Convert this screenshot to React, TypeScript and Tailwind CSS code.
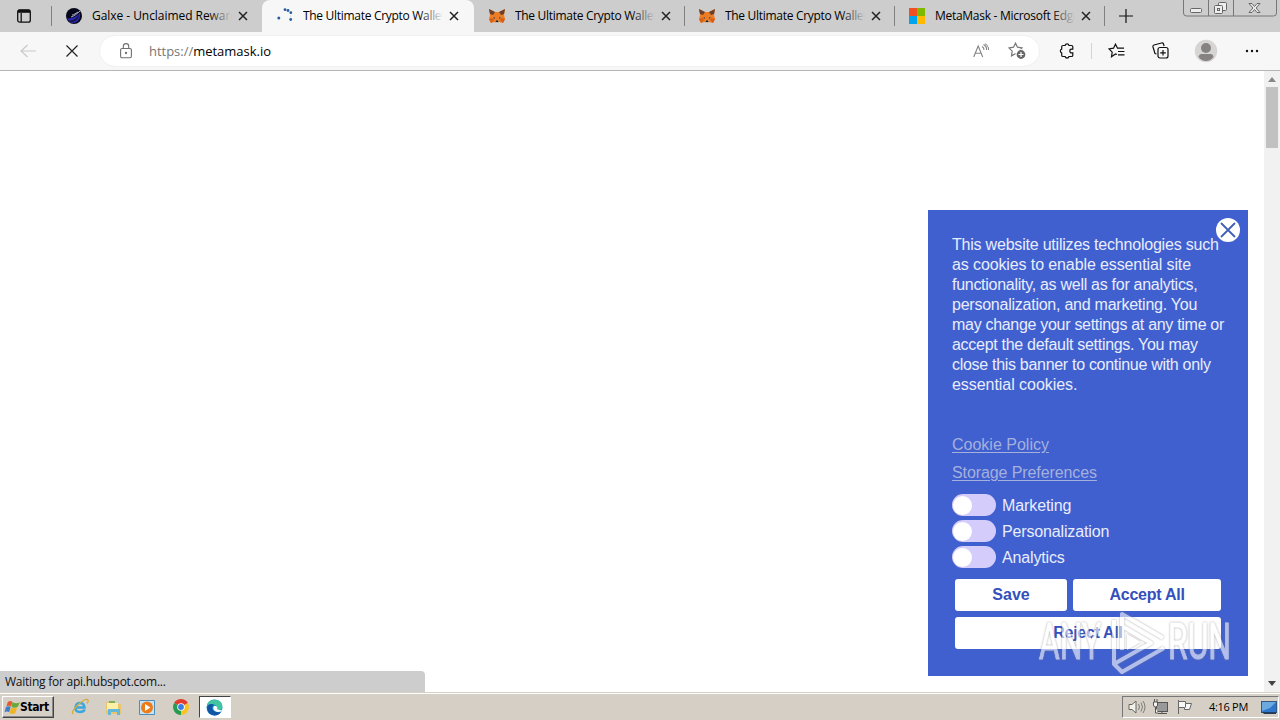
import type { ReactNode } from 'react';

type TabProps = {
  icon: ReactNode;
  title: string;
  active?: boolean;
  divider?: boolean;
  spacing: string;
};

function CloseX() {
  return (
    <svg width="10" height="10" viewBox="0 0 10 10" fill="none" stroke="#222" strokeWidth="1.5">
      <path d="M1 1 9 9M9 1 1 9" />
    </svg>
  );
}

function Tab({ icon, title, active, divider, spacing }: TabProps) {
  return (
    <div
      className={`relative flex h-8 shrink-0 items-center ${
        active ? 'w-[212px] rounded-t-lg bg-[#f7f7f7] pl-[15px]' : 'w-[210px] pl-[14px]'
      }`}
    >
      <div className="h-4 w-4 shrink-0">{icon}</div>
      <div className={`relative ml-[10px] w-[140px] overflow-hidden whitespace-nowrap text-[12px] leading-5 ${spacing}`}>
        {title}
        <div
          className={`absolute inset-y-0 right-0 w-6 bg-linear-to-r from-transparent ${
            active ? 'to-[#f7f7f7]' : 'to-[#cdcdcd]'
          }`}
        />
      </div>
      <div className="ml-[6px]">
        <CloseX />
      </div>
      {divider && <div className="ml-auto h-5 w-px bg-[#808080]" />}
    </div>
  );
}

function Galxe() {
  return (
    <svg viewBox="0 0 16 16">
      <circle cx="8" cy="8" r="8" fill="#07071c" />
      <path d="M1 10c4 1 9-1 13-5 1 6-3 10-7 10-3 0-5-2-6-5Z" fill="#2827a8" />
      <path d="M1 12c5 2 9-1 12-5-1 6-8 9-12 5Z" fill="#111034" />
      <path d="M5 9c3-1 6-3 9-6M6 7c2 0 4-2 6-3" stroke="#d4d4f3" strokeWidth=".8" fill="none" />
    </svg>
  );
}

function Spinner() {
  return (
    <svg viewBox="0 0 16 16" fill="#255f9e">
      <circle cx="1.8" cy="10" r="1.5" />
      <circle cx="13.7" cy="11.5" r="1.4" />
      <circle cx="13.8" cy="4.7" r="1.4" />
      <circle cx="8" cy="1.7" r="1.4" />
      <circle cx="11" cy="2.5" r="1.4" />
      <circle cx="13.7" cy="8" r=".5" opacity=".4" />
    </svg>
  );
}

function Fox() {
  return (
    <svg viewBox="0 0 16 16">
      <path d="M0 1 6 4h4l6-3-1 6 1 4-2 4-4-1-2 1-2-1-4 1-2-4 1-4Z" fill="#ed7d24" />
      <path d="m0 1 6 3-2 3-3-1ZM16 1l-6 3 2 3 3-1Z" fill="#6c3f2b" />
      <path d="m0 11 4-1 1 2-3 3ZM16 11l-4-1-1 2 3 3Z" fill="#d65e16" />
      <path d="m4 9 2 .5V11ZM12 9l-2 .5V11Z" fill="#28435a" />
      <path d="M6.5 12.5h3L10 15H6Z" fill="#cbb7aa" />
      <path d="M7 12.5h2l.5 1.5h-3Z" fill="#202020" />
    </svg>
  );
}

function MicrosoftLogo() {
  return (
    <div className="grid h-4 w-4 grid-cols-2">
      <div className="bg-[#f25022]" />
      <div className="bg-[#7fba00]" />
      <div className="bg-[#00a4ef]" />
      <div className="bg-[#ffb900]" />
    </div>
  );
}

function WindowButtons() {
  return (
    <svg width="94" height="17" viewBox="0 0 94 17" fill="none" stroke="#777">
      <path d="M.5 0v13q0 3 3 3h87q3 0 3-3V0M25.500 0v16M50.500 0v16" />
      <rect x="7.500" y="8.500" width="11" height="4" rx="1" fill="#ededed" stroke="#666" />
      <rect x="35.500" y="2.500" width="8" height="8" rx="1" fill="#eee" stroke="#666" />
      <rect x="31.500" y="5.500" width="8" height="8" rx="1" fill="#eee" stroke="#666" />
      <rect x="34.500" y="8.500" width="2" height="2" stroke="#666" />
      <path d="M66 3.500h3l2.500 3 2.500-3h3l-4 4.500 4 4.500h-3l-2.500-3-2.500 3h-3l4-4.500Z" fill="#eee" stroke="#666" />
    </svg>
  );
}

function TabStrip() {
  return (
    <div className="flex h-8 bg-[#cdcdcd]">
      <div className="flex w-[52px] shrink-0 items-center justify-between pl-[17px]">
        <svg width="14" height="14" viewBox="0 0 14 14" fill="none" stroke="#111" strokeWidth="1.300">
          <rect x=".7" y=".9" width="12.600" height="12.300" rx="2" />
          <path d="M4.200 4v9" />
          <path d="M1 2.300h12" strokeWidth="3" />
        </svg>
        <div className="h-5 w-px bg-[#808080]" />
      </div>
      <Tab icon={<Galxe />} title="Galxe - Unclaimed Rewards" spacing="tracking-[-0.050px]" />
      <Tab icon={<Spinner />} title="The Ultimate Crypto Wallet" active spacing="tracking-[-0.300px]" />
      {/* the strip picks up one pixel after the active tab */}
      <div className="w-px shrink-0" />
      <Tab icon={<Fox />} title="The Ultimate Crypto Wallet" divider spacing="tracking-[-0.300px]" />
      <Tab icon={<Fox />} title="The Ultimate Crypto Wallet" divider spacing="tracking-[-0.300px]" />
      <Tab icon={<MicrosoftLogo />} title="MetaMask - Microsoft Edge" divider spacing="tracking-[-0.280px]" />
      <div className="ml-[14px] flex items-center">
        <svg width="14" height="14" viewBox="0 0 14 14" stroke="#111" strokeWidth="1.200">
          <path d="M7 0v14M0 7h14" />
        </svg>
      </div>
      <div className="mr-[3px] ml-auto">
        <WindowButtons />
      </div>
    </div>
  );
}

const STAR = 'M7.500 1.200l2 4 4.500.8-3.200 3.200.7 4.600-4-2.200-4 2.200.7-4.600L1 6l4.500-.8Z';

function Toolbar() {
  return (
    <div className="flex h-[39px] items-center border-b border-[#b5b5b5] bg-[#f7f7f7]">
      <svg className="ml-5 shrink-0" width="17" height="14" viewBox="0 0 17 14" fill="none" stroke="#c9c9c9" strokeWidth="1.200">
        <path d="M7.500 1 1 7l6.500 6M1 7h15" />
      </svg>
      <svg className="ml-[29px] shrink-0" width="12" height="12" viewBox="0 0 12 12" fill="none" stroke="#222" strokeWidth="1.200">
        <path d="m.5.5 11 11m0-11-11 11" />
      </svg>
      <div className="ml-[22px] flex h-[30px] w-[939px] shrink-0 items-center rounded-full bg-white pl-[20px] outline outline-[#f1f1f1]">
        <svg width="12" height="16" viewBox="0 0 12 16" fill="none" stroke="#707070" strokeWidth="1.100">
          <rect x=".6" y="5.500" width="10.800" height="9.300" rx="1.500" />
          <path d="M3.300 5.500V3.300a2.700 2.700 0 0 1 5.400 0v2.200" />
          <circle cx="6" cy="10" r=".6" fill="#707070" />
        </svg>
        <div className="ml-[17px] text-[13px] leading-5 tracking-[-0.020px] text-black">
          <span className="text-[#777]">https://</span>metamask.io
        </div>
        <svg className="ml-auto" width="16" height="16" viewBox="0 0 16 16" fill="none" stroke="#858585" strokeWidth="1.100">
          <path d="m.7 14 4.500-11 4.500 11M2.200 10.300h6M9 3.500q2 1 2 3.500M10.500 1.500Q14 3.200 13.500 7M12 .6Q16 3 15.500 7" />
        </svg>
        <svg className="mr-[13px] ml-[19px]" width="18" height="18" viewBox="0 0 18 18" fill="none" stroke="#777" strokeWidth="1.200">
          <path d={STAR} />
          <circle cx="13" cy="12.500" r="5" fill="#666" stroke="white" />
          <path d="M13 10v5m-2.500-2.500h5" stroke="white" />
        </svg>
      </div>
      <svg className="ml-[20px] shrink-0" width="16" height="16" viewBox="0 0 16 16" fill="none" stroke="#111" strokeWidth="1.200">
        <path d="M4 2.500h2.100a2 2 0 0 1 3.900 0h2.500q1.300 0 1.300 1.300v2.300q-3-.4-3 1.900t3 1.900v2.300q0 1.300-1.300 1.300H10a2 2 0 0 1-3.900 0H4q-1.300 0-1.300-1.300V9.900a2 2 0 0 1 0-3.800V3.800Q2.700 2.500 4 2.500Z" />
      </svg>
      <div className="ml-[16px] h-4 w-px bg-[#d4d4d4]" />
      <svg className="ml-4 shrink-0" width="18" height="17" viewBox="0 0 18 17" fill="none" stroke="#111" strokeWidth="1.200">
        <path d="M9 11.500 7.500 11l-4 2.700.7-4.600L1 6l4.500-.8 2-4 2 4H16M10 8.500h6.500M10 11.800h6.500" />
      </svg>
      <svg className="ml-[26px] shrink-0" width="18" height="18" viewBox="0 0 18 18" fill="none" stroke="#111" strokeWidth="1.200">
        <path d="M4.500 12 3 11.500 1 5Q.6 3.500 2 3l7.500-2q1.500-.4 2 1l.6 2" />
        <rect x="6" y="5.500" width="10" height="10.500" rx="2" />
        <path d="M11 8v5.500M8.200 10.800h5.600" />
      </svg>
      <svg className="ml-[24px] shrink-0" width="24" height="24" viewBox="0 0 24 24">
        <circle cx="12" cy="12" r="11.200" fill="#d7d5d4" />
        <circle cx="12" cy="9" r="5" fill="#858281" />
        <path d="M4.500 18q.5-3 3-3h9q2.500 0 3 3-3 4-7.500 4t-7.500-4Z" fill="#858281" />
      </svg>
      <svg className="ml-[27px] shrink-0" width="14" height="4" viewBox="0 0 14 4" fill="#111">
        <circle cx="2" cy="2" r="1.200" />
        <circle cx="7" cy="2" r="1.200" />
        <circle cx="12" cy="2" r="1.200" />
      </svg>
    </div>
  );
}

function Toggle({ label, spacing }: { label: string; spacing: string }) {
  return (
    <div className="flex h-[26px] items-center">
      <div className="flex h-[22px] w-11 items-center rounded-full bg-[#d4ccfb] pl-px">
        <div className="h-[19px] w-[19px] rounded-full bg-white" />
      </div>
      <span className={`ml-[6px] pt-0.5 ${spacing}`}>{label}</span>
    </div>
  );
}

const LINES = [
  { text: 'This website utilizes technologies such', spacing: 'tracking-[-0.210px]' },
  { text: 'as cookies to enable essential site', spacing: 'tracking-[-0.110px]' },
  { text: 'functionality, as well as for analytics,', spacing: 'tracking-[-0.280px]' },
  { text: 'personalization, and marketing. You', spacing: 'tracking-[-0.240px]' },
  { text: 'may change your settings at any time or', spacing: 'tracking-[-0.300px]' },
  { text: 'accept the default settings. You may', spacing: 'tracking-[-0.290px]' },
  { text: 'close this banner to continue with only', spacing: 'tracking-[-0.300px]' },
  { text: 'essential cookies.', spacing: 'tracking-[-0.050px]' },
];

function CookieBanner() {
  return (
    <div className="relative mt-[139px] mr-4 ml-auto h-[466px] w-80 shrink-0 bg-[#4060d0] pt-[25px] pl-6 font-['Liberation_Sans',Arial,sans-serif] text-[16px] leading-5 text-[#e9edfb]">
      <svg className="absolute top-2 right-2" width="24" height="24" viewBox="0 0 24 24">
        <circle cx="12" cy="12" r="12" fill="white" />
        <path d="m5 5 14 14m0-14L5 19" stroke="#4060b8" strokeWidth="1.800" />
      </svg>
      {LINES.map((line) => (
        <div key={line.text} className={`relative whitespace-nowrap ${line.spacing}`}>
          {line.text}
        </div>
      ))}
      <div className="mt-10 text-[#a5b0dc] underline underline-offset-2">Cookie Policy</div>
      <div className="mt-2 tracking-[-0.100px] text-[#a5b0dc] underline underline-offset-2">Storage Preferences</div>
      <div className="mt-[9px]">
        <Toggle label="Marketing" spacing="tracking-[-0.100px]" />
        <Toggle label="Personalization" spacing="tracking-[-0.150px]" />
        <Toggle label="Analytics" spacing="tracking-[-0.150px]" />
      </div>
      <div className="mt-[9px] ml-[3px] w-[266px] text-center font-bold text-[#3450bd]">
        <div className="flex gap-[6px] leading-8">
          <div className="h-8 w-28 rounded-[3px] bg-white">Save</div>
          <div className="h-8 w-[148px] rounded-[3px] bg-white tracking-[-0.250px]">Accept All</div>
        </div>
        <div className="mt-[6px] h-8 rounded-[3px] bg-white leading-8 tracking-[-0.300px]">Reject All</div>
      </div>
      {/* watermark */}
      <svg
        className="absolute top-[396px] left-[108px] font-['Roboto',sans-serif] opacity-60 drop-shadow-[0_0_1px_#777]"
        width="200"
        height="70"
        viewBox="0 0 200 70"
        fill="white"
      >
        <g stroke="white">
          <text x="3" y="53" fontSize="50" textLength="62" lengthAdjust="spacingAndGlyphs">ANY</text>
          <text x="132" y="53" fontSize="50" textLength="63" lengthAdjust="spacingAndGlyphs">RUN</text>
        </g>
        <path
          d="M86 44V8l41 24M86 20l29 17-37 21V14M78 58l8 8 42-24"
          fill="none"
          stroke="white"
          strokeWidth="4"
          strokeLinejoin="round"
        />
        <path d="m91 28 14 8-14 8Z" />
      </svg>
    </div>
  );
}

function Page() {
  return (
    <div className="flex h-[621px] bg-white">
      <div className="flex self-end">
        <div className="flex h-[21px] w-[425px] items-center rounded-tr-[4px] bg-[#cdcdcd] pl-[5px] text-[12px] tracking-[-0.240px] text-[#111]">
          Waiting for api.hubspot.com...
        </div>
      </div>
      <CookieBanner />
      <div className="flex w-4 shrink-0 flex-col items-center bg-[#f1f1f1]">
        <svg width="16" height="16" viewBox="0 0 16 16">
          <path d="m4 11 4-5 4 5Z" fill="#888" />
        </svg>
        <div className="h-[61px] w-3 bg-[#c1c1c1]" />
        <svg className="mt-auto" width="16" height="16" viewBox="0 0 16 16">
          <path d="M4 5h8l-4 5Z" fill="#444" />
        </svg>
      </div>
    </div>
  );
}

function StartFlag() {
  return (
    <svg className="shrink-0" width="16" height="15" viewBox="0 0 17 16">
      <path d="M4 2q3-2 5 0L7.500 7Q5 5.500 2.500 7Z" fill="#e55b2b" />
      <path d="M9 2.500q4 2 8 0l-2.500 5q-3.500 1.500-6.500 0Z" fill="#69a93c" />
      <path d="M2 7.500q3-1.500 5 0L5.500 13Q3 11.500.5 13Z" fill="#417dcb" />
      <path d="M7.500 8q3 1.500 6.500 0L12 14q-3 1.500-6 0Z" fill="#f0b521" />
    </svg>
  );
}

function Taskbar() {
  return (
    <div className="h-7 border-t border-[#d6cfc6] bg-[#d6cfc6]">
      <div className="flex h-[27px] items-center border-t border-white">
        <div className="ml-0.5 flex h-[22px] w-[52px] items-center border border-t-white border-r-[#444] border-b-[#444] border-l-white pl-px shadow-[inset_-1px_-1px_#888]">
          <StartFlag />
          <span className="font-['DejaVu_Sans_Condensed','DejaVu_Sans',sans-serif] text-[12px] font-bold tracking-[-0.400px]">Start</span>
        </div>
        {/* Internet Explorer */}
        <svg className="ml-[17px]" width="18" height="18" viewBox="0 0 18 18" fill="none">
          <path d="M5 9.500h8.500q-.4-4.500-4.500-4.500T4.500 9.500 9 14q3.500 0 4.700-2.500" stroke="#3aa7df" strokeWidth="2.500" />
          <path d="M2 16q-2-2 3-7C10 3 16 0 17 2q.6 1-1 3.500" stroke="#d7ad39" strokeWidth="1.300" />
        </svg>
        {/* Explorer */}
        <svg className="ml-4" width="17" height="17" viewBox="0 0 17 17">
          <path d="M1 3h6l1 2h8v10H1Z" fill="#e9c56d" />
          <path d="M2 4h11v7H2Z" fill="#fff0a7" />
          <path d="M3 10h12v6h-3v-3H6v3H3Z" fill="#62b8db" />
          <path d="M4 2h6v2H4Z" fill="#82ae58" />
        </svg>
        {/* Media Player */}
        <svg className="ml-[17px]" width="16" height="17" viewBox="0 0 16 17">
          <path d="M.5 1.500h15v14H.5Z" fill="#c7e4f4" stroke="#4b8dbc" />
          <circle cx="8" cy="8.500" r="6" fill="#ed7b17" />
          <path d="m6 5 5.500 3.500L6 12Z" fill="white" />
        </svg>
        {/* Chrome */}
        <svg className="ml-[18px]" width="16" height="16" viewBox="0 0 16 16">
          <path d="M8 8 1.100 4A8 8 0 0 1 14.900 4Z" fill="#e33b2e" />
          <path d="M8 8 1.100 4A8 8 0 0 0 8 16Z" fill="#279b50" />
          <path d="M8 8 14.900 4A8 8 0 0 1 8 16Z" fill="#f8c423" />
          <circle cx="8" cy="8" r="3.800" fill="white" />
          <circle cx="8" cy="8" r="2.900" fill="#397de5" />
        </svg>
        <div className="ml-[10px] flex h-[22px] w-8 items-center justify-center border border-t-[#444] border-r-white border-b-white border-l-[#444] bg-white pr-px">
          <svg width="17" height="17" viewBox="0 0 17 17">
            <circle cx="8.500" cy="8.500" r="8" fill="#149bd4" />
            <path d="M1 6C3 0 12-1 15.500 4q2 4-.5 6.500-2.500 1.500-5 0Q12 8 9.500 6 5 3.500 1 7Z" fill="#43c4a0" />
            <path d="M1 8c1-3 5-4 7-2q-3 2-1 5t8 2Q12 17 8 16.500 1 15.500 1 8Z" fill="#1454a5" />
            <path d="M8 7q-2 3 1 5t7 0l1-1q-3 1-6-1 1-2-1-3Z" fill="white" />
          </svg>
        </div>
        <div className="mr-px ml-auto flex h-[22px] w-[157px] items-center border border-t-[#777] border-r-white border-b-white border-l-[#777] pl-[5px]">
          <svg width="18" height="16" viewBox="0 0 18 16" fill="none" stroke="#666">
            <path d="M1 5.500h3L8 2v12l-4-3.500H1Z" fill="#f4f1eb" />
            <path d="M10.500 5q2 3 0 6M13 3.500q3 4.500 0 9M15 2q4 6 0 12" strokeWidth=".8" />
          </svg>
          <svg className="ml-[6px]" width="17" height="16" viewBox="0 0 17 16" stroke="#555">
            <rect x="4.500" y="3.500" width="11" height="9" fill="#999" />
            <path d="M6 14.500h9M10 12.500v2" />
            <path d="M1.500 3v3q0 2 2 2t2-2V3ZM2.500 0v3M5 0v3M3.500 8v6H6" fill="#f7f7f7" />
          </svg>
          <svg className="ml-2" width="17" height="16" viewBox="0 0 17 16" stroke="#666">
            <path d="M1.500 1v14" />
            <path d="M1.500 2.500h7v2h6l-2 6h-5v-2h-6Z" fill="#f7f7f7" />
            <path d="M8.500 4.500v4" />
          </svg>
          <span className="ml-[15px] whitespace-nowrap text-[11px] tracking-[-0.300px]">4:16 PM</span>
          <svg className="mr-px ml-auto" width="16" height="15" viewBox="0 0 16 15">
            <rect x=".5" y="1.500" width="15" height="11" fill="#2e76c9" stroke="#335984" />
            <path d="M1 2h14l-6 6-8 3Z" fill="#6ba9df" />
            <path d="M1 12h14v2H3Z" fill="#243b5a" />
          </svg>
        </div>
      </div>
    </div>
  );
}

export default function App() {
  return (
    <div className="flex h-[720px] w-[1280px] flex-col overflow-hidden bg-white font-['Open_Sans','Noto_Sans',sans-serif]">
      <TabStrip />
      <Toolbar />
      <Page />
      <Taskbar />
    </div>
  );
}
